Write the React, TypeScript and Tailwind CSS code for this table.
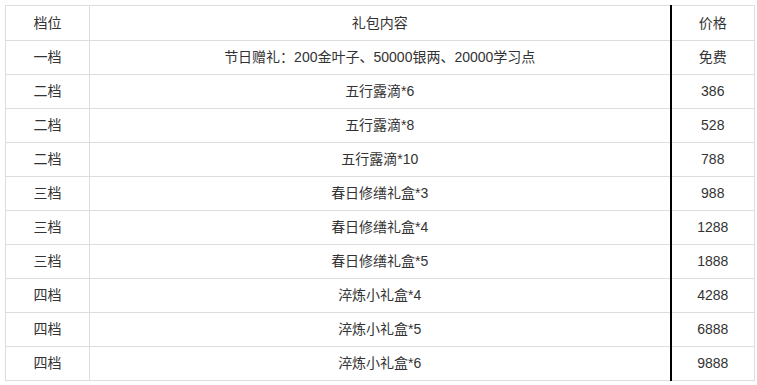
import React from "react";

const rows: [string, string, string][] = [
  ["一档", "节日赠礼：200金叶子、50000银两、20000学习点", "免费"],
  ["二档", "五行露滴*6", "386"],
  ["二档", "五行露滴*8", "528"],
  ["二档", "五行露滴*10", "788"],
  ["三档", "春日修缮礼盒*3", "988"],
  ["三档", "春日修缮礼盒*4", "1288"],
  ["三档", "春日修缮礼盒*5", "1888"],
  ["四档", "淬炼小礼盒*4", "4288"],
  ["四档", "淬炼小礼盒*5", "6888"],
  ["四档", "淬炼小礼盒*6", "9888"],
];

export default function App() {
  return (
    <div
      className="bg-white w-[757px] h-[385px] pl-[5px] pt-[5px]"
      style={{ fontFamily: '"Liberation Sans", "Noto Sans CJK SC", sans-serif' }}
    >
      <table className="border-collapse w-[749px] text-[14px] text-[#333] table-fixed">
        <colgroup>
          <col className="w-[84px]" />
          <col className="w-[581px]" />
          <col className="w-[84px]" />
        </colgroup>
        <tbody>
          <tr className="h-[35px]">
            <td className="border border-[#ddd] text-center p-0">档位</td>
            <td className="border border-[#ddd] border-r-2 border-r-black text-center p-0">礼包内容</td>
            <td className="border border-[#ddd] text-center p-0">价格</td>
          </tr>
          {rows.map((r, i) => (
            <tr key={i} className="h-[34px]">
              <td className="border border-[#ddd] text-center p-0">{r[0]}</td>
              <td className="border border-[#ddd] border-r-2 border-r-black text-center p-0">{r[1]}</td>
              <td className="border border-[#ddd] text-center p-0">{r[2]}</td>
            </tr>
          ))}
        </tbody>
      </table>
    </div>
  );
}
